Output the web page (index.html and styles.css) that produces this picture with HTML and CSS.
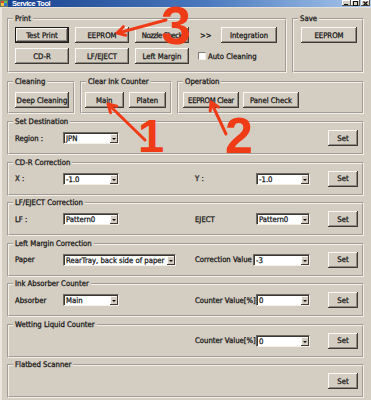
FILE: index.html
```html
<!DOCTYPE html>
<html lang="en">
<head>
  <meta charset="UTF-8">
  <meta name="viewport" content="width=device-width, initial-scale=1.0">
  <title>Service Tool</title>
  <link rel="stylesheet" href="styles.css">
</head>
<body>
  <div class="window">
    <div class="titlebar">
      <svg class="app-icon" width="8" height="7" viewBox="0 0 8 7">
        <rect x="0" y="0" width="8" height="7" fill="#6a7a5a"/>
        <rect x="1" y="1" width="3" height="2" fill="#e04a2a"/>
        <rect x="4" y="1" width="3" height="2" fill="#5ac84a"/>
        <rect x="1" y="3" width="3" height="3" fill="#f0c040"/>
        <rect x="4" y="3" width="3" height="3" fill="#3a70d8"/>
      </svg>
      <span class="title">Service Tool</span>
      <div class="caption-btns">
        <span class="cap-btn"><svg width="7" height="5" viewBox="0 0 7 5"><rect x="1" y="3" width="4" height="1" fill="#111"/></svg></span>
        <span class="cap-btn"><svg width="7" height="5" viewBox="0 0 7 5"><rect x="1.5" y="0.5" width="4" height="4" fill="none" stroke="#111"/></svg></span>
        <span class="cap-btn"><svg width="7" height="5" viewBox="0 0 7 5"><path d="M1.5 0.5 L5.5 4.5 M5.5 0.5 L1.5 4.5" stroke="#111" stroke-width="1.2"/></svg></span>
      </div>
    </div>

    <div class="client">
      <div class="row top">
        <fieldset class="group print">
          <legend>Print</legend>
          <div class="body">
            <div class="btn-row">
              <button class="btn default">Test Print</button>
              <button class="btn">EEPROM</button>
              <button class="btn tighter">Nozzle Check</button>
              <span class="more">&gt;&gt;</span>
              <button class="btn w56">Integration</button>
            </div>
            <div class="btn-row">
              <button class="btn">CD-R</button>
              <button class="btn">LF/EJECT</button>
              <button class="btn">Left Margin</button>
              <label class="check"><span class="box"></span>Auto Cleaning</label>
            </div>
          </div>
        </fieldset>
        <fieldset class="group save">
          <legend>Save</legend>
          <div class="body">
            <button class="btn w56">EEPROM</button>
          </div>
        </fieldset>
      </div>

      <div class="row mid">
        <fieldset class="group cleaning">
          <legend>Cleaning</legend>
          <div class="body">
            <button class="btn">Deep Cleaning</button>
          </div>
        </fieldset>
        <fieldset class="group ink">
          <legend>Clear Ink Counter</legend>
          <div class="body">
            <button class="btn w39">Main</button>
            <button class="btn w38">Platen</button>
          </div>
        </fieldset>
        <fieldset class="group operation">
          <legend>Operation</legend>
          <div class="body">
            <button class="btn w56 tight">EEPROM Clear</button>
            <button class="btn w56">Panel Check</button>
          </div>
        </fieldset>
      </div>

      <fieldset class="group line">
        <legend>Set Destination</legend>
        <div class="body fields">
          <span class="lbl c1">Region :</span>
          <div class="combo c2"><span>JPN</span><i class="drop"></i></div>
          <button class="btn set">Set</button>
        </div>
      </fieldset>

      <fieldset class="group line">
        <legend>CD-R Correction</legend>
        <div class="body fields">
          <span class="lbl c1">X :</span>
          <div class="combo c2"><span>-1.0</span><i class="drop"></i></div>
          <span class="lbl c3">Y :</span>
          <div class="combo c4"><span>-1.0</span><i class="drop"></i></div>
          <button class="btn set">Set</button>
        </div>
      </fieldset>

      <fieldset class="group line">
        <legend>LF/EJECT Correction</legend>
        <div class="body fields">
          <span class="lbl c1">LF :</span>
          <div class="combo c2"><span>Pattern0</span><i class="drop"></i></div>
          <span class="lbl c3">EJECT</span>
          <div class="combo c4"><span>Pattern0</span><i class="drop"></i></div>
          <button class="btn set">Set</button>
        </div>
      </fieldset>

      <fieldset class="group line">
        <legend>Left Margin Correction</legend>
        <div class="body fields">
          <span class="lbl c1">Paper</span>
          <div class="combo c2 long"><span>RearTray, back side of paper</span><i class="drop"></i></div>
          <span class="lbl c3">Correction Value</span>
          <div class="combo c4 shift"><span>-3</span><i class="drop"></i></div>
          <button class="btn set">Set</button>
        </div>
      </fieldset>

      <fieldset class="group line">
        <legend>Ink Absorber Counter</legend>
        <div class="body fields">
          <span class="lbl c1">Absorber</span>
          <div class="combo c2"><span>Main</span><i class="drop"></i></div>
          <span class="lbl c3">Counter Value[%]</span>
          <div class="combo c4"><span>0</span><i class="drop"></i></div>
          <button class="btn set">Set</button>
        </div>
      </fieldset>

      <fieldset class="group line">
        <legend>Wetting Liquid Counter</legend>
        <div class="body fields">
          <span class="lbl c3">Counter Value[%]</span>
          <div class="combo c4"><span>0</span><i class="drop"></i></div>
          <button class="btn set">Set</button>
        </div>
      </fieldset>

      <fieldset class="group line">
        <legend>Flatbed Scanner</legend>
        <div class="body fields">
          <button class="btn set">Set</button>
        </div>
      </fieldset>
    </div>

    <!-- red notes drawn over the screenshot -->
    <svg class="marks" width="371" height="400" viewBox="0 0 371 400">
      <path d="M166 20 L118 33 M125.7 35.3 L117 33 L123.4 26.7"/>
      <path d="M145 140 L109 105 M110.5 112.7 L108 104 L116.8 106.2"/>
      <path d="M226 134 L212 104 M210.2 111 L211 102 L218.4 107.1"/>
      <text x="161" y="44" class="n3">3</text>
      <text x="138" y="152" class="n1">1</text>
      <text x="225" y="153" class="n2">2</text>
    </svg>
  </div>
</body>
</html>
```

FILE: styles.css
```css
body {
  margin: 0;
  font-family: "DejaVu Sans", "Liberation Sans", sans-serif;
  font-stretch: condensed;
  font-size: 7.7px;
  color: #141414;
  -webkit-text-stroke: 0.25px #141414;
  background: #d4cdc2;
}

.window {
  position: relative;
  width: 371px;
  height: 400px;
  background: #d4cdc2;
  overflow: hidden;
}

/* title bar, cut off at the top of the shot */
.titlebar {
  display: flex;
  align-items: flex-end;
  height: 7px;
  border-bottom: 1px solid #e6e2da;
  background: linear-gradient(to right, #163f8c, #4a78bd 55%, #a9c8ec);
  overflow: hidden;
}

.app-icon {
  flex: none;
}

.title {
  margin-left: 4px;
  font-family: "Liberation Sans", sans-serif;
  font-stretch: normal;
  font-weight: bold;
  font-size: 7.5px;
  letter-spacing: -0.5px;
  line-height: 7px;
  color: #fff;
  -webkit-text-stroke: 0;
}

.caption-btns {
  display: flex;
  margin-left: auto;
  margin-right: 1px;
  align-self: flex-start;
}

.cap-btn {
  display: flex;
  align-items: center;
  justify-content: center;
  width: 9px;
  height: 6px;
  background: #d4cdc2;
  box-shadow: inset -1px -1px #55524c, inset 1px 1px #fff;
}

.cap-btn:last-child {
  margin-left: 1px;
}

.client {
  display: flex;
  flex-direction: column;
  height: 392px;
  box-sizing: border-box;
  border-left: 2px solid #ebe7df;
  padding: 6px 7px 0 5px;
}

.row {
  display: flex;
  gap: 5px;
}

.row.mid {
  margin-top: 4px;
}

/* group boxes */
.group {
  margin: 0;
  padding: 0;
  min-width: 0;
  border: 2px groove #f4f0e8;
  box-sizing: border-box;
}

.group legend {
  margin-left: 4px;
  padding: 0 2px;
  line-height: 10px;
}

.print {
  width: 280px;
}

.save {
  flex: 1;
}

.print .body,
.save .body {
  padding: 3px 6px 7px;
}

.save .body {
  padding-left: 7px;
}

.btn-row {
  display: flex;
  align-items: center;
  gap: 6px;
}

.btn-row + .btn-row {
  margin-top: 5px;
}

.more {
  margin-left: 5px;
  width: 12px;
}

.btn-row .w56 {
  margin-left: 3px;
}

.check {
  display: flex;
  align-items: center;
  margin-left: 3px;
}

.check .box {
  width: 8px;
  height: 8px;
  margin-right: 2px;
  box-sizing: border-box;
  background: #fff;
  border: 1px solid;
  border-color: #807c74 #f4f0e8 #f4f0e8 #807c74;
}

.cleaning {
  width: 68px;
}

.ink {
  width: 92px;
}

.operation {
  flex: 1;
}

.mid .body {
  display: flex;
  gap: 4px;
  padding: 5px 4px 4px;
}

.cleaning .body {
  padding-left: 6px;
}

.ink .body {
  gap: 5px;
  padding-left: 3px;
}

.group.line {
  margin-top: 2.5px;
}

.row.mid + .group.line {
  margin-top: 3px;
}

.fields {
  display: grid;
  grid-template-columns: 48px 132px 61px 72px 1fr;
  align-items: center;
  padding: 3px 4px 7px 6px;
}

.fields > * {
  grid-row: 1;
}

.c1 { grid-column: 1; }
.c2 { grid-column: 2; }
.c3 { grid-column: 3; white-space: nowrap; }
.c4 { grid-column: 4; }
.set { grid-column: 5; }

/* buttons */
.btn {
  box-sizing: border-box;
  width: 54px;
  height: 16px;
  padding: 0;
  border: none;
  background: #d4cdc2;
  font: inherit;
  color: inherit;
  white-space: nowrap;
  overflow: hidden;
  box-shadow: inset -1px -1px #3e3b36, inset 1px 1px #fbf9f5, inset -2px -2px #8e8a82;
}

.btn.default {
  box-shadow: inset 0 0 0 1px #1c1b19, inset -2px -2px #3e3b36, inset 2px 2px #fbf9f5, inset -3px -3px #8e8a82;
}

.btn.w56 { width: 56px; }
.btn.w39 { width: 39px; }
.btn.w38 { width: 38px; }
.btn.set { width: 30px; }

.btn.tight {
  letter-spacing: -0.3px;
}

.btn.tighter {
  letter-spacing: -0.5px;
}

/* combo boxes */
.combo {
  display: flex;
  width: 56px;
  height: 12px;
  box-sizing: border-box;
  background: #fff;
  border: 1px solid;
  border-color: #6e6a62 #f4f0e8 #f4f0e8 #6e6a62;
  box-shadow: inset 1px 1px #3a3834;
}

.combo span {
  flex: 1;
  padding: 1px 0 0 2px;
  line-height: 9px;
  white-space: nowrap;
  overflow: hidden;
}

.combo .drop {
  position: relative;
  flex: none;
  width: 8px;
  margin: 1px 0 0;
  background: #d4cdc2;
  box-shadow: inset -1px -1px #3e3b36, inset 1px 1px #fbf9f5;
}

.combo .drop::after {
  content: "";
  position: absolute;
  left: 2px;
  top: 4px;
  border-left: 2px solid transparent;
  border-right: 2px solid transparent;
  border-top: 2px solid #111;
}

.combo.c4 {
  width: 54px;
}

.combo.long {
  width: 113px;
}

.combo.shift {
  margin-left: -3px;
  width: 57px;
}

/* red annotations */
.marks {
  position: absolute;
  left: 0;
  top: 0;
  pointer-events: none;
}

.marks path {
  fill: none;
  stroke: #ef3c17;
  stroke-width: 3;
  stroke-linecap: round;
  stroke-linejoin: round;
}

.marks text {
  font-family: "Liberation Sans", sans-serif;
  font-stretch: normal;
  font-weight: bold;
  fill: #ef3c17;
  -webkit-text-stroke: 0;
}

.marks .n3 { font-size: 54px; }
.marks .n1 { font-size: 47px; }
.marks .n2 { font-size: 50px; }
```
